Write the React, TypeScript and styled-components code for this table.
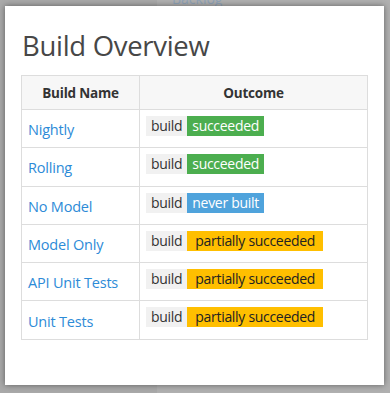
import React from "react";
import styled, { createGlobalStyle } from "styled-components";

type Outcome = "succeeded" | "never" | "partial";

interface Build {
    name: string;
    outcome: Outcome;
}

const builds: Build[] = [
    { name: "Nightly", outcome: "succeeded" },
    { name: "Rolling", outcome: "succeeded" },
    { name: "No Model", outcome: "never" },
    { name: "Model Only", outcome: "partial" },
    { name: "API Unit Tests", outcome: "partial" },
    { name: "Unit Tests", outcome: "partial" },
];

const outcomeLabel: Record<Outcome, string> = {
    succeeded: "succeeded",
    never: "never built",
    partial: "partially succeeded",
};

const App = () => {
    return (
        <>
            <GlobalStyle />
            <Backdrop>
                <BacklogStrip>
                    <BacklogText>Backlog</BacklogText>
                </BacklogStrip>
                <Panel>
                    <Title>Build Overview</Title>
                    <Table>
                        <thead>
                            <tr>
                                <HeadCell $width={117}>Build Name</HeadCell>
                                <HeadCell>Outcome</HeadCell>
                            </tr>
                        </thead>
                        <tbody>
                            {builds.map((b) => (
                                <tr key={b.name}>
                                    <NameCell>
                                        <BuildLink href="#">{b.name}</BuildLink>
                                    </NameCell>
                                    <OutcomeCell>
                                        <Badge>
                                            <BadgeLabel>build</BadgeLabel>
                                            <BadgeStatus $outcome={b.outcome}>
                                                {outcomeLabel[b.outcome]}
                                            </BadgeStatus>
                                        </Badge>
                                    </OutcomeCell>
                                </tr>
                            ))}
                        </tbody>
                    </Table>
                </Panel>
            </Backdrop>
        </>
    );
};
export default App;

const GlobalStyle = createGlobalStyle`
  html, body {
    margin: 0;
    padding: 0;
  }
  body {
    background: linear-gradient(to right, #a9a9a9 157px, #b0b0b0 157px);
    font-family: "Open Sans", "Noto Sans", sans-serif;
    width: 390px;
    height: 393px;
    overflow: hidden;
  }
`;

const Backdrop = styled.div`
  display: flex;
  flex-direction: column;
  padding: 0 6px 0 5px;
`;

const BacklogStrip = styled.div`
  height: 6px;
  overflow: hidden;
  padding-left: 167px;
`;

const BacklogText = styled.div`
  margin-top: -10px;
  font-size: 14px;
  line-height: 18px;
  color: #8fa3b8;
`;

const Panel = styled.div`
  background: #ffffff;
  height: 379px;
  box-sizing: border-box;
  padding: 22px 16px 0 16px;
  box-shadow: 0 0 6px rgba(0, 0, 0, 0.45);
`;

const Title = styled.h1`
  margin: 0 0 11px 1px;
  font-size: 27.5px;
  line-height: 36px;
  font-weight: 400;
  color: #474747;
  letter-spacing: -0.3px;
`;

const Table = styled.table`
  width: 347px;
  border-collapse: collapse;
  border: 1px solid #dddddd;
`;

const HeadCell = styled.th<{ $width?: number }>`
  width: ${(p) => (p.$width ? `${p.$width}px` : "auto")};
  height: 33px;
  padding: 0;
  background: #f7f7f7;
  border: 1px solid #dddddd;
  font-size: 13.5px;
  font-weight: 700;
  letter-spacing: -0.2px;
  color: #333333;
  text-align: center;
`;

const NameCell = styled.td`
  height: 37.3px;
  padding: 0 0 0 6px;
  border: 1px solid #dddddd;
  vertical-align: middle;
`;

const OutcomeCell = styled.td`
  height: 37.3px;
  padding: 0 6px;
  border: 1px solid #dddddd;
  vertical-align: top;
`;

const BuildLink = styled.a`
  display: inline-block;
  padding-top: 3px;
  font-size: 14.5px;
  letter-spacing: -0.2px;
  color: #2d8bd7;
  text-decoration: none;
`;

const Badge = styled.div`
  display: inline-flex;
  margin-top: 6px;
  height: 20px;
  font-size: 14px;
  line-height: 20px;
  letter-spacing: -0.3px;
`;

const BadgeLabel = styled.span`
  padding: 0 5px;
  background: #f1f1f1;
  color: #333333;
`;

const statusColors: Record<Outcome, { bg: string; fg: string }> = {
    succeeded: { bg: "#4cae4f", fg: "#ffffff" },
    never: { bg: "#4fa3dc", fg: "#ffffff" },
    partial: { bg: "#ffbf00", fg: "#222222" },
};

const BadgeStatus = styled.span<{ $outcome: Outcome }>`
  padding: 0 ${(p) => (p.$outcome === "partial" ? 8 : 5)}px;
  background: ${(p) => statusColors[p.$outcome].bg};
  color: ${(p) => statusColors[p.$outcome].fg};
`;
